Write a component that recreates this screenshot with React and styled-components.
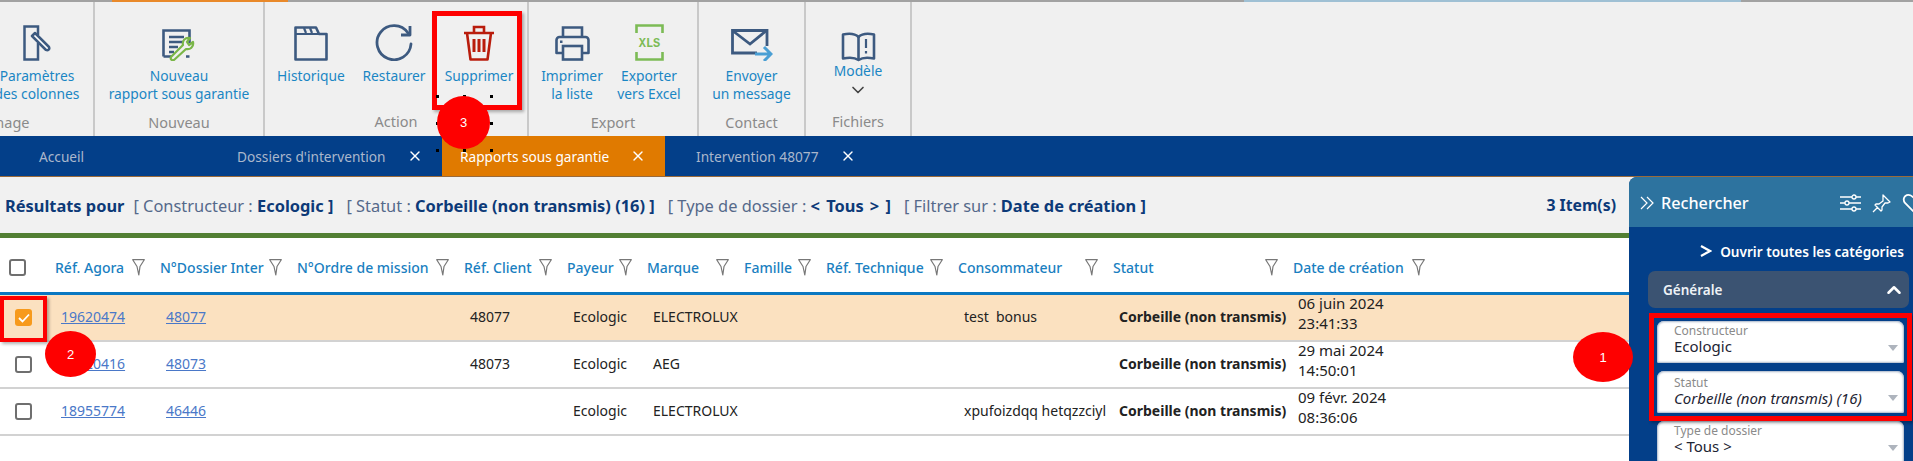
import React from 'react';
import styled, { createGlobalStyle } from 'styled-components';
import { X, ChevronDown, ChevronUp } from 'lucide-react';

const FONT = `"Noto Sans", "Open Sans", sans-serif`;

const Global = createGlobalStyle`
  html, body { margin: 0; padding: 0; background: #fff; overflow: hidden; }
  * { box-sizing: border-box; }
`;

const stroke = '#3d5a80';

const ColumnsIcon = () => (
  <svg width="28" height="36" viewBox="0 0 28 36" fill="none">
    <path d="M15 10V1.5H1.5V34.5H15V18" stroke={stroke} strokeWidth="2.5" />
    <path d="M9 11l3-3 14 14c1 2-1 4-3 3z" fill="#fff" stroke={stroke} strokeWidth="2.5" strokeLinejoin="round" />
  </svg>
);

const ReportIcon = () => (
  <svg width="34" height="32" viewBox="0 0 34 32" fill="none">
    <path d="M1.500 27.500V1.500H27.500V14M1.500 27.500H12M24 27.500h3.500" stroke={stroke} strokeWidth="2.6" />
    <path d="M7 8h15M7 13h15M7 18h9M7 23h5" stroke={stroke} strokeWidth="2.4" />
    <path d="M9 28l12-12c-1-4 2-8 7-7l-3 4 2 3 4-3c1 5-3 8-7 7L12 31c-2 1-4-1-3-3z" fill="#f0f0f0" stroke="#7ab648" strokeWidth="2.2" strokeLinejoin="round" />
  </svg>
);

const HistoryIcon = () => (
  <svg width="34" height="35" viewBox="0 0 34 35" fill="none">
    <path d="M1.500 33.500V1.500H22L25 8H32.500V33.500z" stroke={stroke} strokeWidth="2.6" strokeLinejoin="round" />
    <path d="M1.500 8H25M10 2l2 5M16 2l2 5" stroke={stroke} strokeWidth="2.2" />
  </svg>
);

const RestoreIcon = () => (
  <svg width="38" height="37" viewBox="0 0 38 37" fill="none">
    <path d="M33 9A17 17 0 1 0 36 20" stroke={stroke} strokeWidth="2.8" strokeLinecap="round" />
    <path d="M35 2v9H26" stroke={stroke} strokeWidth="2.8" strokeLinejoin="round" />
  </svg>
);

const TrashIcon = () => (
  <svg width="32" height="36" viewBox="0 0 32 36" fill="none">
    <path d="M1 8H31M11 7V2H21V7" stroke="#b91c0c" strokeWidth="2.6" />
    <path d="M4 8L7.500 34.500H24.500L28 8" stroke="#b91c0c" strokeWidth="2.6" strokeLinejoin="round" />
    <path d="M11 14V27M16 14V27M21 14V27" stroke="#b91c0c" strokeWidth="3" />
  </svg>
);

const PrintIcon = () => (
  <svg width="35" height="35" viewBox="0 0 35 35" fill="none">
    <path d="M8 11V1.500H27V11" stroke={stroke} strokeWidth="2.6" />
    <path d="M8 27H1.500V14a3 3 0 0 1 3-3H30.500a3 3 0 0 1 3 3V27H27" stroke={stroke} strokeWidth="2.6" strokeLinejoin="round" />
    <rect x="8" y="20" width="19" height="13.500" stroke={stroke} strokeWidth="2.6" />
    <rect x="5" y="14.500" width="2.500" height="2.500" fill={stroke} />
  </svg>
);

const XlsIcon = () => (
  <svg width="29" height="37" viewBox="0 0 29 37" fill="none">
    <path d="M1.500 9V1.500H27.500V9M1.500 28V35.500H27.500V28" stroke="#7cbb55" strokeWidth="2.6" />
    <text x="14.500" y="23" textAnchor="middle" fontFamily='"Liberation Mono", monospace' fontWeight="700" fontSize="12" fill="#7cbb55">XLS</text>
  </svg>
);

const MailIcon = () => (
  <svg width="42" height="32" viewBox="0 0 42 32" fill="none">
    <path d="M26 24H1.500V1.500H36V17" stroke={stroke} strokeWidth="2.8" />
    <path d="M2 2l17 13L35 2" stroke={stroke} strokeWidth="2.8" />
    <path d="M24 25H39M33 18l7 7-7 7" stroke="#4a9fd4" strokeWidth="3" />
  </svg>
);

const BookIcon = () => (
  <svg width="35" height="30" viewBox="0 0 35 30" fill="none">
    <path d="M17.500 5C14 1.500 7 1.500 2 2.500V26.500C7 25.500 14 25.500 17.500 28C21 25.500 28 25.500 33 26.500V2.500C28 1.500 21 1.500 17.500 5z" stroke={stroke} strokeWidth="2.6" strokeLinejoin="round" />
    <path d="M17.500 5V28" stroke={stroke} strokeWidth="2.6" />
    <path d="M25 7V16M25 19V21.500" stroke={stroke} strokeWidth="2.2" />
  </svg>
);

const FilterIcon = () => (
  <svg width="13" height="17" viewBox="0 0 13 17" fill="none">
    <path d="M.7.7H12.300L8 7.500 6.800 16 5 7.500z" stroke="#777" strokeWidth="1.200" strokeLinejoin="round" />
  </svg>
);

const Page = styled.div`
  position: relative;
  width: 1913px;
  height: 461px;
  overflow: hidden;
  font-family: ${FONT};
`;

const Ribbon = styled.div`
  display: flex;
  height: 136px;
  background: #f0f0f0;
  border-top: 2px solid #a2a2a2;
  border-image: linear-gradient(
    to right,
    #a2a2a2 113px, #e9892a 113px, #e9892a 289px, #a2a2a2 289px,
    #a2a2a2 1244px, #9fc0d4 1244px, #9fc0d4 1740px, #a2a2a2 1740px
  ) 1;
`;

const Group = styled.div`
  display: flex;
  flex-direction: column;
  flex: none;
  width: ${p => p.$w}px;
  border-right: 2px solid #c9c9c9;
  overflow: hidden;
`;

const GroupItems = styled.div`
  flex: 1;
  display: flex;
  justify-content: ${p => p.$left ? 'flex-start' : 'center'};
  gap: ${p => p.$gap || 0}px;
  margin-left: ${p => p.$ml || 0}px;
`;

const GroupLabel = styled.div`
  height: 34px;
  font-size: 14.5px;
  line-height: 38px;
  color: #8a8a8a;
  text-align: ${p => p.$align || 'center'};
  margin-left: ${p => p.$ml || 0}px;
  white-space: nowrap;
`;

const RibbonButton = styled.div`
  display: flex;
  flex-direction: column;
  align-items: center;
  width: ${p => p.$w}px;
  flex: none;
`;

const IconSlot = styled.div`
  height: ${p => p.$h || 65}px;
  display: flex;
  align-items: flex-end;
  padding-bottom: ${p => p.$pb ?? 6}px;
`;

const ButtonText = styled.div`
  font-size: 13.8px;
  line-height: 18px;
  color: #1a86c4;
  text-align: center;
  white-space: nowrap;
`;

const TabBar = styled.div`
  display: flex;
  height: 41px;
  background: #033f89;
  border-bottom: 1px solid #9a6a3a;
`;

const Tab = styled.div`
  display: flex;
  align-items: center;
  flex: none;
  width: ${p => p.$w}px;
  padding-left: ${p => p.$pl}px;
  background: ${p => p.$active ? '#e07a00' : 'transparent'};
  color: ${p => p.$active ? '#fff' : '#aab7cc'};
  font-size: 13.7px;
  white-space: nowrap;
`;

const TabClose = styled.span`
  display: flex;
  margin-left: ${p => p.$ml}px;
  color: #fff;
`;

const ResultBar = styled.div`
  display: flex;
  align-items: center;
  justify-content: space-between;
  height: 56px;
  padding: 0 297px 0 5px;
  background: #f1f1f1;
  color: #55698a;
  font-size: 16.4px;
`;

const Criteria = styled.div`
  display: flex;
  gap: 13px;
  white-space: nowrap;
`;

const Strong = styled.b`
  color: #0d3a78;
  font-weight: 700;
`;

const Lead = styled(Strong)`
  margin-right: -4px;
`;

const WideStrong = styled(Strong)`
  word-spacing: 2px;
`;

const ItemCount = styled(Strong)`
  font-size: 15.8px;
`;

const Band = styled.div`
  height: 5px;
  background: #527f33;
`;

const columns = '49px 105px 137px 167px 103px 80px 97px 82px 132px 155px 180px 147px 1fr';

const HeaderRow = styled.div`
  display: grid;
  grid-template-columns: ${columns};
  height: 57px;
  padding-top: 4px;
  border-bottom: 3px solid #0a78c2;
  align-items: center;
`;

const HeaderCell = styled.div`
  display: flex;
  align-items: center;
  justify-content: space-between;
  padding: 0 9px 0 6px;
  font-size: 14px;
  font-weight: 500;
  color: #1a7fc1;
  white-space: nowrap;
`;

const Row = styled.div`
  display: grid;
  grid-template-columns: ${columns};
  height: 47px;
  padding-bottom: 3px;
  align-items: center;
  border-bottom: 2px solid #d2d2d2;
  background: ${p => p.$selected ? '#fbe1c0' : '#fff'};
  color: #222;
  font-size: 14px;
`;

const Cell = styled.div`
  padding-left: 12px;
  white-space: nowrap;
  font-weight: ${p => p.$bold ? 700 : 400};
`;

const DateCell = styled(Cell)`
  font-size: 15px;
  line-height: 20px;
  align-self: start;
  margin-top: -2px;
  padding-left: 11px;
`;

const RefLink = styled.a`
  color: #4a78c8;
  text-decoration: underline;
`;

const CheckCell = styled.div`
  display: flex;
  padding-left: ${p => p.$pl}px;
  padding-top: ${p => p.$pt || 0}px;
`;

const Checkbox = styled.span`
  display: flex;
  align-items: center;
  justify-content: center;
  width: 17px;
  height: 17px;
  border-radius: 3px;
  background: ${p => p.$on ? '#f79a1c' : '#fff'};
  border: ${p => p.$on ? 'none' : '2px solid #6f6f6f'};
`;

const Panel = styled.aside`
  position: absolute;
  left: 1629px;
  top: 177px;
  width: 284px;
  height: 284px;
  background: #033f89;
  border-top-left-radius: 8px;
  overflow: hidden;
`;

const PanelHead = styled.div`
  display: flex;
  align-items: center;
  height: 50px;
  padding: 2px 0 0 11px;
  background: #2d739f;
  color: #fff;
  font-size: 16.2px;
  font-weight: 500;
`;

const PanelTitle = styled.span`
  margin-left: 6px;
  flex: 1;
`;

const HeadIcons = styled.div`
  display: flex;
  align-items: center;
  gap: 11px;
  margin-right: -13px;
`;

const OpenAll = styled.div`
  display: flex;
  align-items: center;
  justify-content: flex-end;
  gap: 8px;
  height: 44px;
  padding: 4px 9px 0 0;
  color: #fff;
  font-size: 13.6px;
  font-weight: 600;
  white-space: nowrap;
`;

const Accordion = styled.div`
  display: flex;
  align-items: center;
  justify-content: space-between;
  width: 261px;
  height: 37px;
  margin-left: 19px;
  padding: 0 4px 0 15px;
  background: #3b5372;
  border-radius: 7px;
  color: #eef2f6;
  font-size: 13.5px;
  font-weight: 600;
`;

const FieldStack = styled.div`
  display: flex;
  flex-direction: column;
  gap: 8px;
  width: 247px;
  margin: 13px 0 0 28px;
`;

const Field = styled.div`
  position: relative;
  height: 42px;
  padding: ${p => p.$pt || 3}px 0 0 17px;
  background: #fff;
  border-radius: 7px 7px 2px 2px;
  box-shadow: inset 0 0 2px 1px #a9b5c8;
`;

const FieldLabel = styled.div`
  font-size: 12px;
  line-height: 13px;
  color: #8a8a8a;
`;

const FieldValue = styled.div`
  font-size: 15px;
  line-height: 18px;
  color: #1d2433;
  font-style: ${p => p.$italic ? 'italic' : 'normal'};
`;

const Caret = styled.span`
  position: absolute;
  right: 6px;
  top: 24px;
  border-left: 5px solid transparent;
  border-right: 5px solid transparent;
  border-top: 6px solid #aeb4bd;
`;

const Frame = styled.div`
  position: absolute;
  left: ${p => p.$x}px;
  top: ${p => p.$y}px;
  width: ${p => p.$w}px;
  height: ${p => p.$h}px;
  border: ${p => p.$b}px solid #fe0000;
  box-shadow: 2px 2px 3px rgba(0, 0, 0, .3);
`;

const Badge = styled.div`
  position: absolute;
  left: ${p => p.$x}px;
  top: ${p => p.$y}px;
  width: ${p => p.$w}px;
  height: ${p => p.$h}px;
  display: flex;
  align-items: center;
  justify-content: center;
  border-radius: 50%;
  background: #fe0000;
  color: #fff;
  font-family: "Liberation Sans", sans-serif;
  font-size: 13px;
`;

const Handle = styled.i`
  position: absolute;
  left: ${p => p.$x}px;
  top: ${p => p.$y}px;
  width: 3px;
  height: 3px;
  background: #000;
`;

const rows = [
  { id: '19620474', dossier: '48077', client: '48077', marque: 'ELECTROLUX', conso: 'test\u00a0 bonus', date: '06 juin 2024', time: '23:41:33', selected: true },
  { id: '19620416', dossier: '48073', client: '48073', marque: 'AEG', conso: '', date: '29 mai 2024', time: '14:50:01' },
  { id: '18955774', dossier: '46446', client: '', marque: 'ELECTROLUX', conso: 'xpufoizdqq hetqzzciyl', date: '09 févr. 2024', time: '08:36:06' },
];

const headers = ['Réf. Agora', 'N°Dossier Inter', 'N°Ordre de mission', 'Réf. Client', 'Payeur', 'Marque', 'Famille', 'Réf. Technique', 'Consommateur', 'Statut', 'Date de création'];

const handles = [436, 463, 490].flatMap(x => [95, 122, 149].map(y => ({ x, y }))).filter(h => !(h.x === 463 && h.y === 122));

export default function App() {
  return (
    <Page>
      <Global />
      <Ribbon>
        <Group $w={95}>
          <GroupItems $left $ml={-13}>
            <RibbonButton $w={100}>
              <IconSlot><ColumnsIcon /></IconSlot>
              <ButtonText>Paramètres<br />des colonnes</ButtonText>
            </RibbonButton>
          </GroupItems>
          <GroupLabel $align="left" $ml={-26}>Ménage</GroupLabel>
        </Group>
        <Group $w={170}>
          <GroupItems>
            <RibbonButton $w={168}>
              <IconSlot><ReportIcon /></IconSlot>
              <ButtonText>Nouveau<br />rapport sous garantie</ButtonText>
            </RibbonButton>
          </GroupItems>
          <GroupLabel>Nouveau</GroupLabel>
        </Group>
        <Group $w={264}>
          <GroupItems $left $ml={5}>
            <RibbonButton $w={82}>
              <IconSlot><HistoryIcon /></IconSlot>
              <ButtonText>Historique</ButtonText>
            </RibbonButton>
            <RibbonButton $w={84}>
              <IconSlot><RestoreIcon /></IconSlot>
              <ButtonText>Restaurer</ButtonText>
            </RibbonButton>
            <RibbonButton $w={86}>
              <IconSlot><TrashIcon /></IconSlot>
              <ButtonText>Supprimer</ButtonText>
            </RibbonButton>
          </GroupItems>
          <GroupLabel>Action</GroupLabel>
        </Group>
        <Group $w={170}>
          <GroupItems $left $ml={5} $gap={1}>
            <RibbonButton $w={76}>
              <IconSlot><PrintIcon /></IconSlot>
              <ButtonText>Imprimer<br />la liste</ButtonText>
            </RibbonButton>
            <RibbonButton $w={76}>
              <IconSlot><XlsIcon /></IconSlot>
              <ButtonText>Exporter<br />vers Excel</ButtonText>
            </RibbonButton>
          </GroupItems>
          <GroupLabel>Export</GroupLabel>
        </Group>
        <Group $w={107}>
          <GroupItems>
            <RibbonButton $w={100}>
              <IconSlot><MailIcon /></IconSlot>
              <ButtonText>Envoyer<br />un message</ButtonText>
            </RibbonButton>
          </GroupItems>
          <GroupLabel>Contact</GroupLabel>
        </Group>
        <Group $w={106}>
          <GroupItems>
            <RibbonButton $w={90}>
              <IconSlot $h={60} $pb={0}><BookIcon /></IconSlot>
              <ButtonText>Modèle</ButtonText>
              <ChevronDown size={20} color="#444" />
            </RibbonButton>
          </GroupItems>
          <GroupLabel>Fichiers</GroupLabel>
        </Group>
      </Ribbon>

      <TabBar>
        <Tab $w={190} $pl={39}>Accueil</Tab>
        <Tab $w={252} $pl={47}>Dossiers d'intervention<TabClose $ml={21}><X size={16} /></TabClose></Tab>
        <Tab $w={223} $pl={18} $active>Rapports sous garantie<TabClose $ml={21}><X size={16} /></TabClose></Tab>
        <Tab $w={220} $pl={31}>Intervention 48077<TabClose $ml={22}><X size={16} /></TabClose></Tab>
      </TabBar>

      <ResultBar>
        <Criteria>
          <Lead>Résultats pour</Lead>
          <span>[ Constructeur : <Strong>Ecologic ]</Strong></span>
          <span>[ Statut : <Strong>Corbeille (non transmis) (16) ]</Strong></span>
          <span>[ Type de dossier : <WideStrong>&lt; Tous &gt; ]</WideStrong></span>
          <span>[ Filtrer sur : <Strong>Date de création ]</Strong></span>
        </Criteria>
        <ItemCount>3 Item(s)</ItemCount>
      </ResultBar>
      <Band />

      <HeaderRow>
        <CheckCell $pl={9}><Checkbox /></CheckCell>
        {headers.map(h => (
          <HeaderCell key={h}>{h}<FilterIcon /></HeaderCell>
        ))}
      </HeaderRow>
      {rows.map(r => (
        <Row key={r.id} $selected={r.selected}>
          <CheckCell $pl={15} $pt={3}>
            <Checkbox $on={r.selected}>
              {r.selected && (
                <svg width="12" height="10" viewBox="0 0 12 10" fill="none">
                  <path d="M1 5l3.500 3.500L11 1.500" stroke="#fff" strokeWidth="1.800" />
                </svg>
              )}
            </Checkbox>
          </CheckCell>
          <Cell><RefLink>{r.id}</RefLink></Cell>
          <Cell><RefLink>{r.dossier}</RefLink></Cell>
          <Cell />
          <Cell>{r.client}</Cell>
          <Cell>Ecologic</Cell>
          <Cell>{r.marque}</Cell>
          <Cell />
          <Cell />
          <Cell>{r.conso}</Cell>
          <Cell $bold>Corbeille (non transmis)</Cell>
          <DateCell>{r.date}<br />{r.time}</DateCell>
        </Row>
      ))}

      <Panel>
        <PanelHead>
          <svg width="15" height="14" viewBox="0 0 15 14" fill="none">
            <path d="M1 1l6 6-6 6M7 1l6 6-6 6" stroke="#fff" strokeWidth="1.200" />
          </svg>
          <PanelTitle>Rechercher</PanelTitle>
          <HeadIcons>
            <svg width="21" height="20" viewBox="0 0 21 20" fill="none" stroke="#fff" strokeWidth="1.300">
              <path d="M0 4H12M16 4H21M0 10H5M9 10H21M0 16H12M16 16H21" />
              <circle cx="14" cy="4" r="2" /><circle cx="7" cy="10" r="2" /><circle cx="14" cy="16" r="2" />
            </svg>
            <svg width="19" height="19" viewBox="0 0 19 19" fill="none" stroke="#fff" strokeWidth="1.300" strokeLinejoin="round">
              <path d="M11 1l7 7-2 1-3 0-3 4 0 3-1 1-6-6 1-1 3 0 4-3 0-3zM6 13l-5 5" />
            </svg>
            <svg width="24" height="22" viewBox="0 0 24 22" fill="none" stroke="#fff" strokeWidth="1.800">
              <path d="M12 20L3 11C-1 6 5-1 12 6c7-7 13 0 9 5z" />
            </svg>
          </HeadIcons>
        </PanelHead>
        <OpenAll>
          <svg width="12" height="12" viewBox="0 0 12 12" fill="none">
            <path d="M1 1l9 5-9 5" stroke="#fff" strokeWidth="2.200" />
          </svg>
          Ouvrir toutes les catégories
        </OpenAll>
        <Accordion>Générale<ChevronUp size={22} color="#fff" strokeWidth={2.8} /></Accordion>
        <FieldStack>
          <Field>
            <FieldLabel>Constructeur</FieldLabel>
            <FieldValue>Ecologic</FieldValue>
            <Caret />
          </Field>
          <Field $pt={5}>
            <FieldLabel>Statut</FieldLabel>
            <FieldValue $italic>Corbeille (non transmis) (16)</FieldValue>
            <Caret />
          </Field>
          <Field>
            <FieldLabel>Type de dossier</FieldLabel>
            <FieldValue>&lt; Tous &gt;</FieldValue>
            <Caret />
          </Field>
        </FieldStack>
      </Panel>

      <Frame $x={432} $y={11} $w={90} $h={99} $b={5} />
      <Frame $x={0} $y={296} $w={47} $h={46} $b={4} />
      <Frame $x={1649} $y={313} $w={263} $h={108} $b={5} />
      {handles.map(h => <Handle key={`${h.x}-${h.y}`} $x={h.x} $y={h.y} />)}
      <Badge $x={437} $y={96} $w={53} $h={53}>3</Badge>
      <Badge $x={45} $y={331} $w={51} $h={46}>2</Badge>
      <Badge $x={1573} $y={332} $w={60} $h={50}>1</Badge>
    </Page>
  );
}
